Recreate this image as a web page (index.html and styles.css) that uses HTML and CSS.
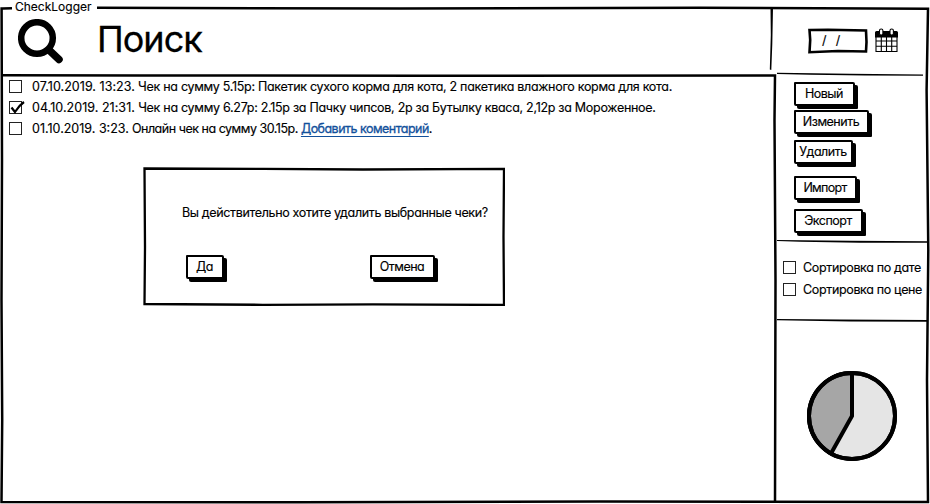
FILE: index.html
```html
<!DOCTYPE html>
<html lang="ru">
<head>
<meta charset="utf-8">
<title>CheckLogger</title>
<link rel="stylesheet" href="styles.css">
</head>
<body>
<div class="window">
  <svg class="frame" viewBox="0 0 930 504" aria-hidden="true">
    <path d="M12 8.200L3 8.500L1.600 8.500L2 160L1.500 300L2.200 420L1.500 502L300 502.300L600 501.600L928 502L927 380L928.300 250L926.600 90L928 8.800L700 7.800L400 8.600L97 7.800"/>
    <path d="M1 75.200L140 75.500L420 75.700L775 75.500L774.500 120L775.500 280L775 502"/>
    <path class="fill" d="M770.500 8H773L772.300 44L771.300 70L769.800 69.500L770.800 35Z"/>
    <path class="fill" d="M777 72.800L850 73.700L923 74.400V75.700L865 75.600L810 74.700L777 74Z"/>
    <path class="fill" d="M777 240L850 240.700L928 241.300V242.800L860 242.700L800 241.800L777 241Z"/>
    <path class="fill" d="M777 319L840 319.400L928 320V321.800L850 321.500L777 320.300Z"/>
  </svg>
  <div class="title">CheckLogger</div>
  <main class="content">
    <header class="search">
      <svg class="search-icon" width="46" height="46" viewBox="0 0 46 46"><circle cx="19" cy="19" r="15.800"/><path d="M31 31L41 40.500"/></svg>
      <h1>Поиск</h1>
    </header>
    <ul class="checks">
      <li><i class="box"></i><span class="row-a"><time>07.10.2019. 13:23.</time> Чек на сумму 5.15р: Пакетик сухого корма для кота, 2 пакетика влажного корма для кота.</span></li>
      <li><i class="box"><svg class="tick" width="16" height="15" viewBox="0 0 16 15"><path d="M1.500 7.500L5 12Q9 5.500 14 2"/></svg></i><span class="row-b"><time>04.10.2019. 21:31.</time> Чек на сумму 6.27р: 2.15р за Пачку чипсов, 2р за Бутылку кваса, 2,12р за Мороженное.</span></li>
      <li><i class="box"></i><span class="row-c"><time>01.10.2019. 3:23.</time> Онлайн чек на сумму 30.15р. <a>Добавить коментарий</a>.</span></li>
    </ul>
    <section class="dialog">
      <svg class="dialog-frame" viewBox="0 0 362 139" aria-hidden="true"><path d="M1.500 1.500L120 1.800L220 2.500L361 1.800L360.500 70L361 138L230 137.300L120 137.800L1.500 137L2 80Z"/></svg>
      <p>Вы действительно хотите удалить выбранные чеки?</p>
      <div class="actions">
        <button class="btn yes">Да</button>
        <button class="btn cancel">Отмена</button>
      </div>
    </section>
  </main>
  <aside class="side">
    <div class="date">
      <div class="date-field"><svg width="60" height="26" viewBox="0 0 60 26"><path d="M1.500 2L20 1.700L58 2.500L58.500 14L58 23.500L30 23L1.500 24.200L2.200 12Z"/></svg><span>/&nbsp; /</span></div>
      <svg class="calendar" width="23" height="25" viewBox="0 0 23 25"><path class="head" d="M0.500 5Q.5 3.500 2 3.500H21Q22.500 3.500 22.500 5V9H.5Z"/><path d="M1 8V23.500H22V8M1 13H22M1 18.200H22M6.300 8V23.500M11.500 8V23.500M16.700 8V23.500"/><rect x="4.500" y="1" width="3.400" height="6" rx="1.600"/><rect x="15" y="1" width="3.400" height="6" rx="1.600"/></svg>
    </div>
    <div class="tools">
      <button class="btn new">Новый</button>
      <button class="btn edit">Изменить</button>
      <button class="btn delete">Удалить</button>
      <button class="btn import">Импорт</button>
      <button class="btn export">Экспорт</button>
    </div>
    <div class="sorting">
      <label><i class="box"></i><span>Сортировка по дате</span></label>
      <label><i class="box"></i><span>Сортировка по цене</span></label>
    </div>
    <svg class="pie" width="90" height="90" viewBox="0 0 90 90"><circle cx="45" cy="45" r="43" fill="#e5e5e5"/><path d="M45 45V2A43 43 0 0 0 24 82.500Z" fill="#a6a6a6"/><circle cx="45" cy="45" r="43" fill="none"/></svg>
  </aside>
</div>
</body>
</html>
```
FILE: styles.css
```css
* { box-sizing: border-box; }
body { margin: 0; background: #fff; color: #000; font: 12.5px/21px Inter, "Open Sans", sans-serif; font-feature-settings: "cv11"; -webkit-text-stroke: .15px; }
.window { position: relative; width: 930px; height: 504px; display: grid; grid-template-columns: 776px 154px; overflow: hidden; }
.frame { position: absolute; inset: 0; width: 930px; height: 504px; pointer-events: none; }
.frame path { fill: none; stroke: #000; stroke-width: 2.5; }
.frame .fill { fill: #000; stroke: none; }
.title { position: absolute; left: 15px; top: 0; font-size: 12px; line-height: 13px; white-space: nowrap; }
.content { display: flex; flex-direction: column; }
.search { height: 76px; display: flex; padding: 19px 0 0 18px; }
.search-icon { fill: none; stroke: #000; stroke-width: 6.500; stroke-linecap: round; }
.search-icon path { stroke-width: 7.500; }
h1 { margin: -4px 0 0 33px; font-size: 36px; line-height: 48px; font-weight: 400; letter-spacing: -1px; -webkit-text-stroke: .3px; }
.checks { list-style: none; margin: 0; padding: 0 0 0 9px; height: 91px; }
.checks li { height: 21px; display: flex; align-items: center; gap: 10px; white-space: nowrap; }
.row-a { letter-spacing: -.3px; }
.row-b { letter-spacing: -.29px; }
.row-c { letter-spacing: -.48px; }
.checks time { letter-spacing: .04px; }
.row-c time { letter-spacing: 0; }
.box { flex: none; position: relative; width: 13px; height: 13px; border: 1px solid #222; }
.tick { position: absolute; left: 0; top: -2px; fill: none; stroke: #000; stroke-width: 2.200; }
a { color: #12509b; text-decoration: underline; text-underline-offset: 3px; letter-spacing: -.52px; -webkit-text-stroke: .3px #12509b; }
.dialog { position: relative; width: 362px; height: 139px; margin-left: 143px; padding-top: 35px; }
.dialog-frame { position: absolute; inset: 0; width: 362px; height: 139px; fill: none; stroke: #000; stroke-width: 2.300; }
.dialog p { margin: 0 0 0 39px; white-space: nowrap; letter-spacing: -.35px; }
.actions { display: flex; padding: 32px 0 0 43px; gap: 146px; }
.btn { display: flex; align-items: center; justify-content: center; flex: none; height: 24px; padding: 0 1px 1px 0; border: 2px solid #000; border-radius: 1px 2px 1px 2px; background: #fff; box-shadow: 3px 3px 0 #000; color: #000; font: inherit; font-feature-settings: inherit; letter-spacing: -.5px; white-space: nowrap; }
.yes { width: 38px; }
.cancel { width: 65px; }
.date { height: 74px; display: flex; padding: 28px 0 0 32px; gap: 7px; }
.date-field { position: relative; width: 60px; height: 26px; padding: 2px 0 0 14px; }
.date-field svg { position: absolute; inset: 0; fill: none; stroke: #000; stroke-width: 2.600; }
.date-field span { letter-spacing: .7px; }
.calendar { fill: none; stroke: #000; stroke-width: 1.100; }
.calendar .head { fill: #000; }
.calendar rect { fill: #fff; }
.tools { height: 168px; padding: 8px 0 0 18px; display: flex; flex-direction: column; }
.new { width: 61px; }
.edit { width: 75px; margin-top: 4px; }
.delete { width: 59px; margin-top: 6px; }
.import { width: 63px; margin-top: 12px; letter-spacing: -.7px; }
.export { width: 69px; margin-top: 9px; }
.sorting { height: 79px; padding: 14px 0 0 7px; }
.sorting label { height: 22px; display: flex; align-items: center; gap: 7px; white-space: nowrap; letter-spacing: -.35px; }
.pie { margin: 49.500px 0 0 31px; stroke: #000; stroke-width: 4; }
```
